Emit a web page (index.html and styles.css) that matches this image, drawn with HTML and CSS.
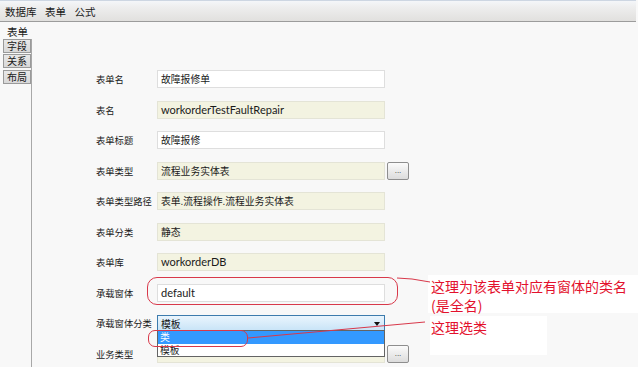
FILE: index.html
```html
<!DOCTYPE html>
<html lang="zh-CN">
<head>
    <meta charset="UTF-8">
    <title>表单设置</title>
    <link rel="stylesheet" href="styles.css">
</head>
<body>
    <!-- top menu -->
    <div class="menubar">
        <span>数据库</span>
        <span>表单</span>
        <span>公式</span>
    </div>

    <div class="main">
        <div class="sidebar">
            <div class="side-title">表单</div>
            <div class="tabs">
                <div class="tab">字段</div>
                <div class="tab">关系</div>
                <div class="tab">布局</div>
            </div>
        </div>

        <div class="content">
            <div class="form">
                <label>表单名</label>
                <div class="field"><span class="cjk">故障报修单</span></div>

                <label>表名</label>
                <div class="field readonly">workorderTestFaultRepair</div>

                <label>表单标题</label>
                <div class="field"><span class="cjk">故障报修</span></div>

                <label>表单类型</label>
                <div class="field readonly with-btn"><span class="cjk">流程业务实体表</span><button class="dots">...</button></div>

                <label>表单类型路径</label>
                <div class="field readonly"><span class="cjk">表单.流程操作.流程业务实体表</span></div>

                <label>表单分类</label>
                <div class="field readonly"><span class="cjk">静态</span></div>

                <label>表单库</label>
                <div class="field readonly">workorderDB</div>

                <label>承载窗体</label>
                <div class="field">default</div>

                <label>承载窗体分类</label>
                <div class="field select"><span class="cjk">模板</span><span class="arrow"></span></div>

                <label>业务类型</label>
                <div class="field readonly with-btn"><span></span><button class="dots">...</button></div>
            </div>
        </div>
    </div>

    <!-- open dropdown of 承载窗体分类 -->
    <div class="dropdown">
        <div class="opt active">类</div>
        <div class="opt">模板</div>
    </div>

    <!-- red notes drawn over the screenshot -->
    <div class="note-bg note-bg1"></div>
    <div class="note-bg note-bg2"></div>
    <div class="mark mark1"></div>
    <div class="mark mark2"></div>
    <svg class="note-lines" width="638" height="367">
        <polyline points="397,278 412,279 430,282" fill="none" stroke="#d8384a" stroke-width="1"/>
        <polyline points="248,338 425,322" fill="none" stroke="#d8384a" stroke-width="1"/>
    </svg>
    <div class="note note1">这理为该表单对应有窗体的类名<br>(是全名)</div>
    <div class="note note2">这理选类</div>
</body>
</html>
```

FILE: styles.css
```css
html, body {
    margin: 0;
    padding: 0;
    overflow: hidden;
}
body {
    position: relative;
    width: 638px;
    height: 367px;
    background-color: #f8f8f8;
    font-family: "Noto Sans CJK SC", "Noto Sans", sans-serif;
    color: #1a1a1a;
}
.menubar {
    height: 20px;
    border-top: 1px solid #cdd6e2;
    border-bottom: 1px solid #9c9c9c;
    background: linear-gradient(#f4f6f9 0, #eeeeee 30%, #e1e0de 100%);
    display: flex;
    align-items: center;
    gap: 8.5px;
    padding-left: 5px;
    font-size: 10.5px;
    margin-right: 2px;
}
.main {
    display: flex;
    height: 345px;
}
.sidebar {
    width: 32px;
    display: flex;
    flex-direction: column;
}
.side-title {
    font-size: 10.5px;
    padding: 3px 0 0 7px;
    height: 13px;
    line-height: 13px;
}
.tabs {
    flex: 1;
    margin-top: 1px;
    padding-left: 3px;
    border-right: 1px solid #a8a8a8;
    display: flex;
    flex-direction: column;
    gap: 1px;
}
.tab {
    width: 26px;
    height: 12px;
    line-height: 12px;
    border: 1px solid #9a9a9a;
    background: linear-gradient(#e8e8e8, #d8d8d8);
    font-size: 10px;
    text-align: center;
}
.tab + .tab + .tab {
    margin-top: 1px;
}
.content {
    flex: 1;
    padding: 48px 0 0 64px;
}
.form {
    display: grid;
    grid-template-columns: 61px 251px;
    grid-auto-rows: 18px;
    row-gap: 12.5px;
    align-items: center;
}
.form label {
    font-size: 9.3px;
}
.field {
    box-sizing: border-box;
    width: 228px;
    height: 18px;
    border: 1px solid #dedede;
    background: #ffffff;
    padding-left: 3px;
    font-family: "Lato", "Noto Sans CJK SC", sans-serif;
    font-size: 11px;
    line-height: 16px;
    white-space: nowrap;
}
.field .cjk {
    font-family: "Noto Sans CJK SC", sans-serif;
    font-size: 9.8px;
}
.readonly {
    background: #f3f3e1;
    border-color: #e4e4d6;
}
.with-btn {
    position: relative;
    overflow: visible;
}
.dots {
    position: absolute;
    left: 229px;
    top: -1px;
    width: 22px;
    height: 18px;
    padding: 0;
    border: 1px solid #8e8e8e;
    border-radius: 2px;
    background: linear-gradient(#fbfbfb, #dcdcdc);
    font-size: 8px;
    line-height: 10px;
    color: #333;
}
.select {
    position: relative;
    height: 17px;
    border: 1px solid #3d7bad;
    background: linear-gradient(#eaf5fd, #c7e3f7);
}
.select .cjk {
    color: #111;
}
.arrow {
    position: absolute;
    right: 4px;
    top: 6px;
    border-left: 3px solid transparent;
    border-right: 3px solid transparent;
    border-top: 4px solid #111;
}
.dropdown {
    position: absolute;
    left: 157px;
    top: 330px;
    width: 228px;
    box-sizing: border-box;
    border: 1px solid #646464;
    background: #fff;
    font-size: 9.8px;
}
.opt {
    height: 12.5px;
    line-height: 12.5px;
    padding-left: 2px;
}
.opt.active {
    background: #3399ff;
    color: #fff;
}
.note-bg {
    position: absolute;
    background: #ffffff;
}
.note-bg1 {
    left: 428px;
    top: 275px;
    width: 210px;
    height: 38px;
}
.note-bg2 {
    left: 430px;
    top: 316px;
    width: 117px;
    height: 39px;
}
.mark {
    position: absolute;
    border: 1px solid #d8384a;
    box-sizing: border-box;
}
.mark1 {
    left: 147px;
    top: 277px;
    width: 251px;
    height: 28px;
    border-radius: 10px;
}
.mark2 {
    left: 148px;
    top: 330px;
    width: 100px;
    height: 17px;
    border-radius: 7px;
}
.note-lines {
    position: absolute;
    left: 0;
    top: 0;
}
.note {
    position: absolute;
    left: 431px;
    color: #e3112d;
    font-size: 14px;
    line-height: 19px;
}
.note1 {
    top: 277px;
}
.note2 {
    top: 318px;
}
```
